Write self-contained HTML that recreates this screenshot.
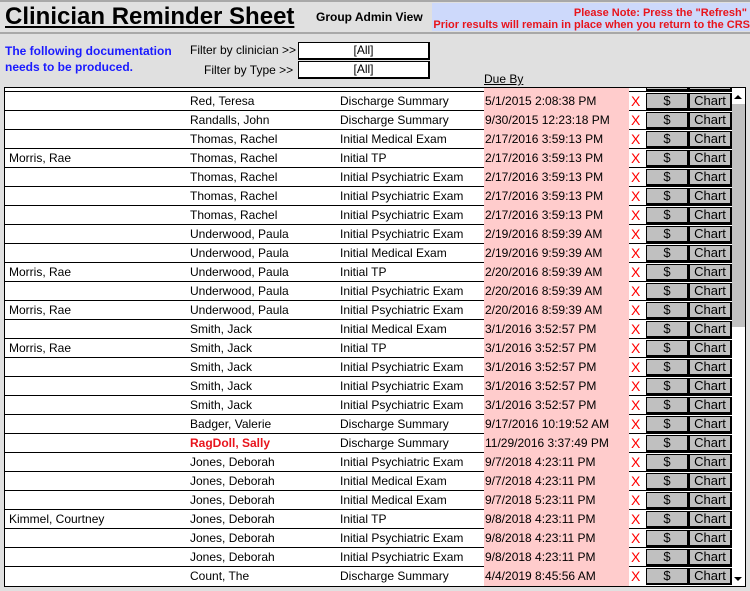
<!DOCTYPE html>
<html><head><meta charset="utf-8"><style>
*{margin:0;padding:0;box-sizing:border-box}
body{width:750px;height:591px;background:#e0e0e0;font-family:"Liberation Sans",Arial,sans-serif;font-size:12px;color:#000;position:relative;overflow:hidden}
.a{position:absolute;white-space:nowrap}
#top{position:absolute;left:0;top:0;width:750px;height:2px;background:#a8a8a8}
#hl{position:absolute;left:0;top:32px;width:750px;height:2px;background:#a8a8a8}
#note{position:absolute;left:432px;top:3px;width:318px;height:28px;background:#cdd9fb;color:#e8141c;font-weight:bold;font-size:11px;text-align:right;line-height:12px;padding-top:4px}
.fb{position:absolute;left:298px;width:132px;height:18px;background:#fff;border:1px solid #000;border-right-width:2px;border-bottom-width:2px;text-align:center;line-height:15px}
#box{position:absolute;left:4px;top:87px;width:742px;height:500px;background:#fff;border:1px solid #000;overflow:hidden}
.r{position:absolute;left:0;width:727px;height:19px;border-top:1px solid #000}
.r span{position:absolute;top:2px;line-height:15px}
.c1{left:4px}.c2{left:185px}.c3{left:335px}
.pk{position:absolute;left:479px;top:-1px;width:145px;height:20px;background:#ffcccc}
.pk i{font-style:normal;position:absolute;left:1px;top:3px}
.x{position:absolute;left:626px;top:2px;color:#f00;font-size:14px;line-height:15px}
.b{position:absolute;top:1px;height:17px;background:#c0c0c0;border:2px solid #000;border-top-width:1px;border-left-width:1px;text-align:center;line-height:14px;font-size:13px}
.d{left:641px;width:43px}.ch{left:684px;width:43px}
#sb{position:absolute;left:727px;top:3px;width:14px;height:496px;background:#fff}
#th{position:absolute;left:727px;top:16px;width:14px;height:223px;background:#c0c0c0}
.ar{position:absolute;left:729px;width:0;height:0;border-left:4px solid transparent;border-right:4px solid transparent}
</style></head><body>
<div id="top"></div>
<div class="a" style="left:5px;top:3px;font-size:24px;font-weight:bold;text-decoration:underline;line-height:28px">Clinician Reminder Sheet</div>
<div class="a" style="left:316px;top:10px;font-weight:bold;font-size:12px">Group Admin View</div>
<div id="note">Please Note: Press the "Refresh"&nbsp;<br>Prior results will remain in place when you return to the CRS</div>
<div id="hl"></div>
<div class="a" style="left:5px;top:43px;color:#1a1aff;font-weight:bold;line-height:16px">The following documentation<br>needs to be produced.</div>
<div class="a" style="left:190px;top:43px">Filter by clinician &gt;&gt;</div>
<div class="a" style="left:204px;top:63px">Filter by Type &gt;&gt;</div>
<div class="fb" style="top:42px">[All]</div>
<div class="fb" style="top:61px">[All]</div>
<div class="a" style="left:484px;top:72px;text-decoration:underline">Due By</div>
<div id="box">
<div class="r" style="top:-16px"><div class="pk"></div><div class="b d"></div><div class="b ch"></div></div>
<div class="r" style="top:3px"><span class="c2">Red, Teresa</span><span class="c3">Discharge Summary</span><div class="pk"><i>5/1/2015 2:08:38 PM</i></div><span class="x">X</span><div class="b d">$</div><div class="b ch">Chart</div></div>
<div class="r" style="top:22px"><span class="c2">Randalls, John</span><span class="c3">Discharge Summary</span><div class="pk"><i>9/30/2015 12:23:18 PM</i></div><span class="x">X</span><div class="b d">$</div><div class="b ch">Chart</div></div>
<div class="r" style="top:41px"><span class="c2">Thomas, Rachel</span><span class="c3">Initial Medical Exam</span><div class="pk"><i>2/17/2016 3:59:13 PM</i></div><span class="x">X</span><div class="b d">$</div><div class="b ch">Chart</div></div>
<div class="r" style="top:60px"><span class="c1">Morris, Rae</span><span class="c2">Thomas, Rachel</span><span class="c3">Initial TP</span><div class="pk"><i>2/17/2016 3:59:13 PM</i></div><span class="x">X</span><div class="b d">$</div><div class="b ch">Chart</div></div>
<div class="r" style="top:79px"><span class="c2">Thomas, Rachel</span><span class="c3">Initial Psychiatric Exam</span><div class="pk"><i>2/17/2016 3:59:13 PM</i></div><span class="x">X</span><div class="b d">$</div><div class="b ch">Chart</div></div>
<div class="r" style="top:98px"><span class="c2">Thomas, Rachel</span><span class="c3">Initial Psychiatric Exam</span><div class="pk"><i>2/17/2016 3:59:13 PM</i></div><span class="x">X</span><div class="b d">$</div><div class="b ch">Chart</div></div>
<div class="r" style="top:117px"><span class="c2">Thomas, Rachel</span><span class="c3">Initial Psychiatric Exam</span><div class="pk"><i>2/17/2016 3:59:13 PM</i></div><span class="x">X</span><div class="b d">$</div><div class="b ch">Chart</div></div>
<div class="r" style="top:136px"><span class="c2">Underwood, Paula</span><span class="c3">Initial Psychiatric Exam</span><div class="pk"><i>2/19/2016 8:59:39 AM</i></div><span class="x">X</span><div class="b d">$</div><div class="b ch">Chart</div></div>
<div class="r" style="top:155px"><span class="c2">Underwood, Paula</span><span class="c3">Initial Medical Exam</span><div class="pk"><i>2/19/2016 9:59:39 AM</i></div><span class="x">X</span><div class="b d">$</div><div class="b ch">Chart</div></div>
<div class="r" style="top:174px"><span class="c1">Morris, Rae</span><span class="c2">Underwood, Paula</span><span class="c3">Initial TP</span><div class="pk"><i>2/20/2016 8:59:39 AM</i></div><span class="x">X</span><div class="b d">$</div><div class="b ch">Chart</div></div>
<div class="r" style="top:193px"><span class="c2">Underwood, Paula</span><span class="c3">Initial Psychiatric Exam</span><div class="pk"><i>2/20/2016 8:59:39 AM</i></div><span class="x">X</span><div class="b d">$</div><div class="b ch">Chart</div></div>
<div class="r" style="top:212px"><span class="c1">Morris, Rae</span><span class="c2">Underwood, Paula</span><span class="c3">Initial Psychiatric Exam</span><div class="pk"><i>2/20/2016 8:59:39 AM</i></div><span class="x">X</span><div class="b d">$</div><div class="b ch">Chart</div></div>
<div class="r" style="top:231px"><span class="c2">Smith, Jack</span><span class="c3">Initial Medical Exam</span><div class="pk"><i>3/1/2016 3:52:57 PM</i></div><span class="x">X</span><div class="b d">$</div><div class="b ch">Chart</div></div>
<div class="r" style="top:250px"><span class="c1">Morris, Rae</span><span class="c2">Smith, Jack</span><span class="c3">Initial TP</span><div class="pk"><i>3/1/2016 3:52:57 PM</i></div><span class="x">X</span><div class="b d">$</div><div class="b ch">Chart</div></div>
<div class="r" style="top:269px"><span class="c2">Smith, Jack</span><span class="c3">Initial Psychiatric Exam</span><div class="pk"><i>3/1/2016 3:52:57 PM</i></div><span class="x">X</span><div class="b d">$</div><div class="b ch">Chart</div></div>
<div class="r" style="top:288px"><span class="c2">Smith, Jack</span><span class="c3">Initial Psychiatric Exam</span><div class="pk"><i>3/1/2016 3:52:57 PM</i></div><span class="x">X</span><div class="b d">$</div><div class="b ch">Chart</div></div>
<div class="r" style="top:307px"><span class="c2">Smith, Jack</span><span class="c3">Initial Psychiatric Exam</span><div class="pk"><i>3/1/2016 3:52:57 PM</i></div><span class="x">X</span><div class="b d">$</div><div class="b ch">Chart</div></div>
<div class="r" style="top:326px"><span class="c2">Badger, Valerie</span><span class="c3">Discharge Summary</span><div class="pk"><i>9/17/2016 10:19:52 AM</i></div><span class="x">X</span><div class="b d">$</div><div class="b ch">Chart</div></div>
<div class="r" style="top:345px"><span class="c2" style="color:#e8141c;font-weight:bold">RagDoll, Sally</span><span class="c3">Discharge Summary</span><div class="pk"><i>11/29/2016 3:37:49 PM</i></div><span class="x">X</span><div class="b d">$</div><div class="b ch">Chart</div></div>
<div class="r" style="top:364px"><span class="c2">Jones, Deborah</span><span class="c3">Initial Psychiatric Exam</span><div class="pk"><i>9/7/2018 4:23:11 PM</i></div><span class="x">X</span><div class="b d">$</div><div class="b ch">Chart</div></div>
<div class="r" style="top:383px"><span class="c2">Jones, Deborah</span><span class="c3">Initial Medical Exam</span><div class="pk"><i>9/7/2018 4:23:11 PM</i></div><span class="x">X</span><div class="b d">$</div><div class="b ch">Chart</div></div>
<div class="r" style="top:402px"><span class="c2">Jones, Deborah</span><span class="c3">Initial Medical Exam</span><div class="pk"><i>9/7/2018 5:23:11 PM</i></div><span class="x">X</span><div class="b d">$</div><div class="b ch">Chart</div></div>
<div class="r" style="top:421px"><span class="c1">Kimmel, Courtney</span><span class="c2">Jones, Deborah</span><span class="c3">Initial TP</span><div class="pk"><i>9/8/2018 4:23:11 PM</i></div><span class="x">X</span><div class="b d">$</div><div class="b ch">Chart</div></div>
<div class="r" style="top:440px"><span class="c2">Jones, Deborah</span><span class="c3">Initial Psychiatric Exam</span><div class="pk"><i>9/8/2018 4:23:11 PM</i></div><span class="x">X</span><div class="b d">$</div><div class="b ch">Chart</div></div>
<div class="r" style="top:459px"><span class="c2">Jones, Deborah</span><span class="c3">Initial Psychiatric Exam</span><div class="pk"><i>9/8/2018 4:23:11 PM</i></div><span class="x">X</span><div class="b d">$</div><div class="b ch">Chart</div></div>
<div class="r" style="top:478px"><span class="c2">Count, The</span><span class="c3">Discharge Summary</span><div class="pk"><i>4/4/2019 8:45:56 AM</i></div><span class="x">X</span><div class="b d">$</div><div class="b ch">Chart</div></div>
<div id="sb"></div><div id="th"></div>
<div class="ar" style="top:7px;border-bottom:4px solid #000"></div>
<div class="ar" style="top:489px;border-top:4px solid #000"></div>
</div>
</body></html>
